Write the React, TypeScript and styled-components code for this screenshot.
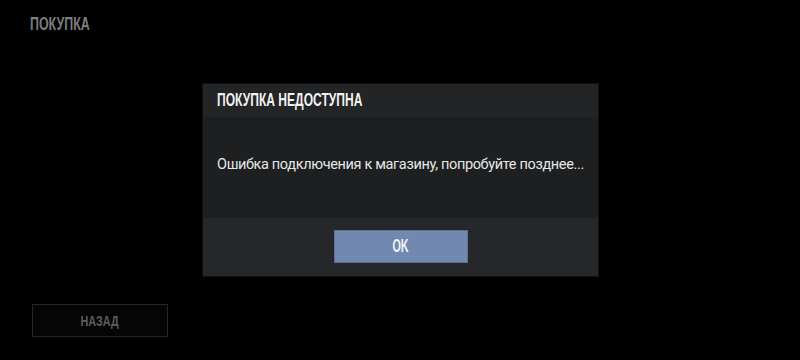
import React from "react";
import styled, { createGlobalStyle } from "styled-components";

const Global = createGlobalStyle`
  html, body { margin: 0; padding: 0; background: #000; }
  #root { width: 800px; height: 360px; }
`;

const Screen = styled.div`
  position: relative;
  width: 800px;
  height: 360px;
  background: #000;
  display: flex;
  flex-direction: column;
  justify-content: space-between;
  overflow: hidden;
`;

const Condensed = styled.span<{ $scale: number; $origin?: string }>`
  display: inline-block;
  white-space: nowrap;
  font-family: "Liberation Sans", Arial, sans-serif;
  font-weight: 700;
  transform: scaleX(${(p) => p.$scale});
  transform-origin: ${(p) => p.$origin ?? "left"} center;
`;

const PageTitle = styled.div`
  padding: 13px 0 0 30px;
  font-size: 18px;
  line-height: 22px;
  color: #7d7d7d;
`;

const Footer = styled.div`
  padding: 0 0 23px 32px;
`;

const BackButton = styled.div`
  width: 134px;
  height: 31px;
  border: 1px solid #262626;
  background: #050505;
  display: flex;
  align-items: center;
  justify-content: center;
  font-size: 15px;
  color: #5e5e5e;
`;

const Overlay = styled.div`
  position: absolute;
  inset: 0;
  display: flex;
  align-items: center;
  justify-content: center;
  padding-left: 1px;
`;

const Dialog = styled.div`
  width: 395px;
  display: flex;
  flex-direction: column;
  background: #1d1f21;
  box-shadow: 0 0 0 1px #111;
`;

const DialogHeader = styled.div`
  height: 33px;
  background: #222426;
  display: flex;
  align-items: center;
  padding-left: 14px;
  font-size: 18px;
  color: #f2f2f2;
`;

const DialogBody = styled.div`
  height: 101px;
  display: flex;
  align-items: center;
  padding: 0 0 6px 14px;
  box-sizing: border-box;
  font-family: Roboto, "Liberation Sans", sans-serif;
  font-size: 14.5px;
  letter-spacing: -0.35px;
  white-space: nowrap;
  color: #e6e6e6;
`;

const DialogFooter = styled.div`
  height: 58px;
  background: #25272a;
  display: flex;
  align-items: center;
  justify-content: center;
  padding-bottom: 1px;
  box-sizing: border-box;
`;

const OkButton = styled.div`
  width: 134px;
  height: 33px;
  background: #7188b0;
  border: 1px solid #5c7090;
  box-sizing: border-box;
  display: flex;
  align-items: center;
  justify-content: center;
  font-size: 18px;
  color: #eef2f8;
`;

export default function App() {
  return (
    <>
      <Global />
      <Screen>
        <PageTitle>
          <Condensed $scale={0.69}>ПОКУПКА</Condensed>
        </PageTitle>
        <Footer>
          <BackButton>
            <Condensed $scale={0.72} $origin="center">НАЗАД</Condensed>
          </BackButton>
        </Footer>
        <Overlay>
          <Dialog>
            <DialogHeader>
              <Condensed $scale={0.67}>ПОКУПКА НЕДОСТУПНА</Condensed>
            </DialogHeader>
            <DialogBody>Ошибка подключения к магазину, попробуйте позднее...</DialogBody>
            <DialogFooter>
              <OkButton>
                <Condensed $scale={0.6} $origin="center">OK</Condensed>
              </OkButton>
            </DialogFooter>
          </Dialog>
        </Overlay>
      </Screen>
    </>
  );
}
